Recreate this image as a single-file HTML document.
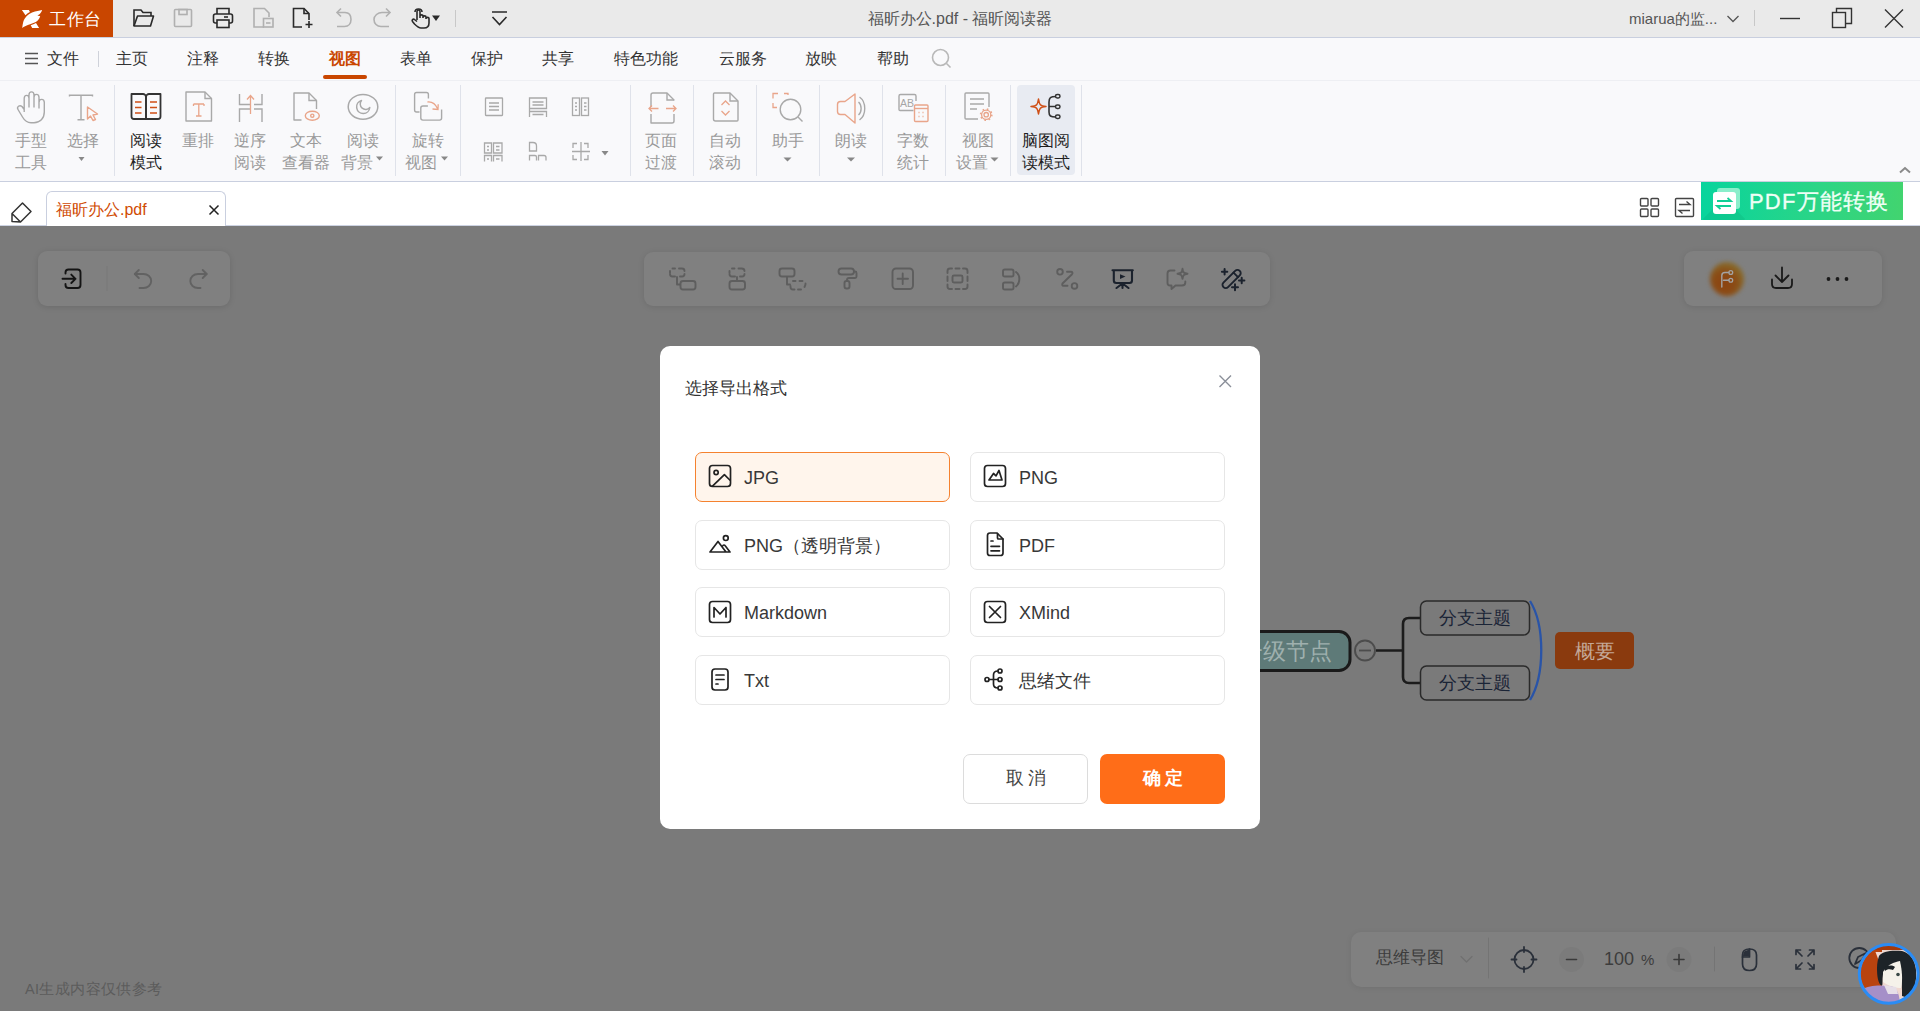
<!DOCTYPE html>
<html><head><meta charset="utf-8">
<style>
*{margin:0;padding:0;box-sizing:border-box}
html,body{width:1920px;height:1011px;overflow:hidden;background:#7a7a7a;font-family:"Liberation Sans",sans-serif;position:relative}
.a{position:absolute}
svg{position:absolute;overflow:visible}
#title{left:0;top:0;width:1920px;height:38px;background:#eaeaea;border-bottom:1px solid #c9cfdf}
#logo{left:0;top:0;width:113px;height:37px;background:#c94600;color:#fff;font-size:17px}
#menu{left:0;top:38px;width:1920px;height:42px;background:#f9f9fb}
#ribbon{left:0;top:80px;width:1920px;height:102px;background:#f9f9fb;border-top:1px solid #eeeff3;border-bottom:1px solid #c9cfdf}
#tabbar{left:0;top:182px;width:1920px;height:44px;background:#fff}
.mt{font-size:16px;color:#333;top:49px;line-height:20px;white-space:nowrap}
.rl{font-size:16px;color:#9a9a9a;line-height:22px;text-align:center;white-space:nowrap}
.rl.dk{color:#1e1e1e}
.sep{width:1px;background:#dfe2ea}
.tbsep{width:1px;background:#c8c8c8}
</style></head><body>
<!-- TITLE BAR -->
<div id="title" class="a"></div>

<div id="logo" class="a">
 <svg width="32" height="26" style="left:16px;top:6px" viewBox="0 0 32 26"><path d="M5.9 3.9 L12.9 3.9 L13.9 5.9 C12 6.8 10.5 7.9 9.5 9.3 Z" fill="#fff"/><path d="M6.2 21.9 C6.8 17 7.5 14.5 8.8 12.5 C11 8.5 15 6.3 19 5.4 C21.5 4.8 24 4.2 26.1 3.9 C25.6 5.6 24.8 7 23.5 8.2 L21.4 9.5 L24.2 10.3 C23.2 13 21.8 15 19.8 16 C17.5 17.3 14.5 18 12.5 18.7 C10 19.6 8 20.5 6.2 21.9 Z" fill="#fff"/><path d="M14.7 19.2 C16.5 18.6 18.4 17.8 20 17 L23.1 21.9 L16.2 21.9 Z" fill="#fff"/></svg>
 <div class="a" style="left:49px;top:9px;font-size:17px;line-height:21px;color:#fff;letter-spacing:0.5px">工作台</div>
</div>
<svg width="400" height="37" style="left:0;top:0" fill="none" stroke-width="1.6">
 <!-- open folder -->
 <path d="M134 26 L134 10 L141 10 L143 12.5 L151 12.5 L151 16" stroke="#2a2a2a"/>
 <path d="M134 26 L137.5 16 L153.5 16 L150.5 26 Z" stroke="#2a2a2a" stroke-linejoin="round"/>
 <!-- save -->
 <rect x="174.5" y="9.5" width="17" height="17" rx="1" stroke="#b0b0b0"/>
 <rect x="179" y="9.5" width="8" height="5" stroke="#b0b0b0"/>
 <!-- print -->
 <path d="M217 14 L217 8.5 L229 8.5 L229 14" stroke="#2a2a2a"/>
 <rect x="213.5" y="14" width="19" height="9" rx="2" stroke="#2a2a2a"/>
 <rect x="217" y="20" width="12" height="7.5" fill="#ebebeb" stroke="#2a2a2a"/>
 <line x1="224" y1="17" x2="228" y2="17" stroke="#2a2a2a"/>
 <!-- doc disabled -->
 <path d="M264 27 L254 27 L254 8.5 L264.5 8.5 L269 13 L269 17" stroke="#b0b0b0"/>
 <rect x="263.5" y="18.5" width="9.5" height="8.5" stroke="#b0b0b0"/>
 <line x1="266" y1="23" x2="270.5" y2="23" stroke="#b0b0b0"/>
 <!-- new doc -->
 <path d="M302 27 L293.5 27 L293.5 8.5 L304 8.5 L309 13.5 L309 20" stroke="#2a2a2a"/>
 <path d="M304 8.5 L304 13.5 L309 13.5" stroke="#2a2a2a"/>
 <path d="M309 21 L309 28 M305.5 24.5 L312.5 24.5" stroke="#2a2a2a"/>
 <!-- undo -->
 <path d="M338 12.5 L345 12.5 C349 12.5 351 15.5 351 19.5 C351 23.5 348.5 26.5 344.5 26.5 L337 26.5" stroke="#b0b0b0"/>
 <path d="M341 8.5 L337 12.5 L341 16.5" stroke="#b0b0b0"/>
 <!-- redo -->
 <path d="M389 12.5 L382 12.5 C378 12.5 374 15.5 374 19.5 C374 23.5 377 26.5 381 26.5 L389 26.5" stroke="#b0b0b0"/>
 <path d="M386 8.5 L390 12.5 L386 16.5" stroke="#b0b0b0"/>
 <!-- hand -->
 <path d="M417 20 L417 11.5 C417 9.5 420 9.5 420 11.5 L420 18 M420 16 C420 14.5 423 14.5 423 16 L423 18 M423 17 C423 15.5 426 15.5 426 17 L426 19 M426 18.5 C426 17 429 17 429 18.5 L429 23 C429 26 427 28 424 28 L421 28 C418.5 28 416.5 26 414.5 24 L412.5 21.5 C411.5 20 413 18.5 414.5 19.5 L417 21.5" stroke="#2a2a2a" stroke-linejoin="round"/>
 <path d="M415 12 C415 8 422 8 422 12" stroke="#2a2a2a"/>
 <path d="M432 15.5 L440 15.5 L436 21 Z" fill="#2a2a2a" stroke="none"/>
 <line x1="455.5" y1="10" x2="455.5" y2="27" stroke="#c8c8c8" stroke-width="1"/>
 <!-- dropdown -->
 <path d="M492 12 L507 12 M492.5 17 L499.5 24.5 L506.5 17" stroke="#2a2a2a"/>
</svg>
<div class="a" style="left:0;top:9px;width:1920px;text-align:center;font-size:16px;line-height:20px;color:#555">福昕办公.pdf - 福昕阅读器</div>
<div class="a" style="left:1629px;top:9px;font-size:15px;line-height:20px;color:#555;white-space:nowrap">miarua的监...</div>
<svg width="1920" height="37" style="left:0;top:0" fill="none" stroke-width="1.3">
 <path d="M1727.5 16 L1733 21.5 L1738.5 16" stroke="#555"/>
 <line x1="1754.5" y1="10" x2="1754.5" y2="26" stroke="#c8c8c8" stroke-width="1"/>
 <line x1="1780" y1="18.5" x2="1800" y2="18.5" stroke="#333" stroke-width="1.4"/>
 <rect x="1832.5" y="12.5" width="13" height="15" stroke="#333" stroke-width="1.4"/>
 <path d="M1836.5 12.5 L1836.5 8.5 L1851.5 8.5 L1851.5 23.5 L1845.5 23.5" stroke="#333" stroke-width="1.4"/>
 <path d="M1885 9.5 L1903 27.5 M1903 9.5 L1885 27.5" stroke="#333" stroke-width="1.4"/>
</svg>

<div id="menu" class="a"></div>
<svg width="20" height="20" style="left:24px;top:52px"><path d="M1 1.5 H14 M1 6.5 H14 M1 11.5 H14" stroke="#555" stroke-width="1.5"/></svg>
<div class="a mt" style="left:47px">文件</div>
<div class="a" style="left:98px;top:51px;width:1px;height:16px;background:#cfd2da"></div>
<div class="a mt" style="left:116px">主页</div>
<div class="a mt" style="left:187px">注释</div>
<div class="a mt" style="left:258px">转换</div>
<div class="a mt" style="left:329px;color:#c94600;font-weight:bold">视图</div>
<div class="a" style="left:323px;top:75px;width:44px;height:4px;border-radius:2px;background:#c94600"></div>
<div class="a mt" style="left:400px">表单</div>
<div class="a mt" style="left:471px">保护</div>
<div class="a mt" style="left:542px">共享</div>
<div class="a mt" style="left:614px">特色功能</div>
<div class="a mt" style="left:719px">云服务</div>
<div class="a mt" style="left:805px">放映</div>
<div class="a mt" style="left:877px">帮助</div>
<svg width="24" height="24" style="left:931px;top:48px" fill="none"><circle cx="9.5" cy="9.5" r="8" stroke="#b8b8b8" stroke-width="1.6"/><path d="M15.5 15.5 L19.5 19.5" stroke="#b8b8b8" stroke-width="1.6"/></svg>

<div id="ribbon" class="a"></div>
<div class="a" style="left:1017px;top:85px;width:58px;height:90px;border-radius:4px;background:#e8ebf2"></div>
<svg width="1920" height="100" style="left:0;top:81px" fill="none" stroke-width="1.4">
 <g stroke="#dfe2ea" stroke-width="1">
  <line x1="114.5" y1="4" x2="114.5" y2="95"/><line x1="395.5" y1="4" x2="395.5" y2="95"/><line x1="460.5" y1="4" x2="460.5" y2="95"/>
  <line x1="630.5" y1="4" x2="630.5" y2="95"/><line x1="693.5" y1="4" x2="693.5" y2="95"/><line x1="756.5" y1="4" x2="756.5" y2="95"/>
  <line x1="819.5" y1="4" x2="819.5" y2="95"/><line x1="882.5" y1="4" x2="882.5" y2="95"/><line x1="945.5" y1="4" x2="945.5" y2="95"/>
  <line x1="1010.5" y1="4" x2="1010.5" y2="95"/><line x1="1081.5" y1="4" x2="1081.5" y2="95"/>
 </g>
 <!-- hand -->
 <path d="M24.2 31 L24.2 17.5 C24.2 13.3 29 13.3 29 17.5 L29 14 C29 9.8 34 9.8 34 14 L34 16.5 C34 12.3 39 12.3 39 16.5 L39 21.5 C39 17.3 44.3 17.3 44.3 21.5 L44.3 31 C44.3 37.5 40 41.7 34 41.7 L31 41.7 C27 41.7 24.5 39.5 22.5 36 L18 28.5 C16.5 26 19.5 23.5 22 25.5 L24.2 28.5 M29 17.5 L29 26.6 M34 14 L34 26.6 M39 19 L39 27.5" stroke="#a9a9a9" stroke-linejoin="round"/>
 <!-- select T + cursor -->
 <path d="M69.5 15.5 L69.5 14.2 L92.5 14.2 L92.5 15.5 M81 14.2 L81 38.8 M77.5 38.8 L84.5 38.8" stroke="#a9a9a9"/>
 <path d="M87.5 26 L97.5 33 L93 34 L95.5 38.5 L93 39.5 L90.5 35 L87.5 38 Z" stroke="#e9a58a" stroke-linejoin="round"/>
 <path d="M78.5 76 L84.5 76 L81.5 80 Z" fill="#888" stroke="none"/>
 <!-- reading mode -->
 <path d="M131.5 13 L143 13 C144.5 13 146 14.5 146 16 L146 38 L134 38 C132.5 38 131.5 37 131.5 35.5 Z" stroke="#333" stroke-width="1.8" stroke-linejoin="round"/>
 <path d="M160.5 13 L149 13 C147.5 13 146 14.5 146 16 L146 38 L158 38 C159.5 38 160.5 37 160.5 35.5 Z" stroke="#333" stroke-width="1.8" stroke-linejoin="round"/>
 <path d="M135 21 L141.5 21 M135 26.5 L141.5 26.5 M135 32 L141.5 32 M150 21 L157 21 M150 26.5 L157 26.5 M150 32 L157 32" stroke="#cf4f17" stroke-width="1.4"/>
 <!-- reflow -->
 <path d="M186 40 L186 11 L205 11 L211.5 17.5 L211.5 40 Z" stroke="#a9a9a9" stroke-linejoin="round"/>
 <path d="M205 11 L205 17.5 L211.5 17.5" stroke="#a9a9a9"/>
 <path d="M193.5 23 L204 23 M193.5 23 L193.5 25 M204 23 L204 25 M198.8 23 L198.8 35 M196 35 L201.5 35" stroke="#e9a58a" stroke-width="1.3"/>
 <!-- reverse reading -->
 <path d="M239.5 13 L239.5 23.5 L250 23.5 M239.5 41 L239.5 28 L250 28 M262 13 L262 23.5 L254 23.5 M262 41 L262 28 L254 28" stroke="#a9a9a9"/>
 <path d="M250.5 33 L250.5 15 M247 18.5 L250.5 14.5 L254 18.5" stroke="#e9a58a" stroke-width="1.3"/>
 <!-- text viewer -->
 <path d="M301.5 39 L294 39 L294 12 L309 12 L316.5 19.5 L316.5 28" stroke="#a9a9a9" stroke-linejoin="round"/>
 <path d="M309 12 L309 19.5 L316.5 19.5" stroke="#a9a9a9"/>
 <ellipse cx="312.3" cy="34.7" rx="7" ry="4.5" stroke="#e9a58a"/>
 <circle cx="312.3" cy="34.7" r="1.6" stroke="#e9a58a"/>
 <!-- reading background -->
 <ellipse cx="363" cy="25.8" rx="14.8" ry="12.4" stroke="#a9a9a9" stroke-width="1.5"/>
 <path d="M361.5 19.5 A6.6 6.6 0 1 0 369.8 26.5 A5.3 5.3 0 0 1 361.5 19.5 Z" stroke="#a9a9a9" stroke-width="1.5" stroke-linejoin="round"/>
 <path d="M376 75.5 L383 75.5 L379.5 79.5 Z" fill="#888" stroke="none"/>
 <!-- rotate -->
 <path d="M419.5 31 L416.5 31 C415.3 31 414.6 30.3 414.6 29 L414.6 13.5 C414.6 12.2 415.3 11.5 416.5 11.5 L426.5 11.5 C427.8 11.5 428.4 12.2 428.4 13.5 L428.4 17.4" stroke="#a9a9a9"/>
 <path d="M427.9 25 L423 25 C421.7 25 420.8 25.7 420.8 27 L420.8 37 C420.8 38.3 421.7 39.1 423 39.1 L439.6 39.1 C440.9 39.1 441.6 38.3 441.6 37 L441.6 28.5" stroke="#a9a9a9"/>
 <path d="M427.5 21 C431.5 20.5 435.5 23 437.8 28 M432.5 28 L438 28.5 L438.2 23.2" stroke="#e9a58a" stroke-width="1.3"/>
 <path d="M441 75.5 L448 75.5 L444.5 79.5 Z" fill="#888" stroke="none"/>
 <!-- small grid icons -->
 <g stroke="#a9a9a9" stroke-width="1.3">
  <rect x="485.5" y="17" width="17" height="17.5" rx="0.5"/>
  <path d="M489 22 L499 22 M489 25.5 L499 25.5 M489 29 L499 29"/>
  <path d="M529.5 34.5 L529.5 17 L546.5 17 L546.5 27.5 L529.5 27.5 M532.5 21 L543.5 21 M532.5 24 L543.5 24 M529.5 36 L529.5 30.5 L546.5 30.5 L546.5 36 M532.5 33.5 L543.5 33.5"/>
  <rect x="572.5" y="17" width="7" height="17.5"/><rect x="581.5" y="17" width="7" height="17.5"/>
  <path d="M575 22 L577 22 M575 25.5 L577 25.5 M575 29 L577 29 M584 22 L586.5 22 M584 25.5 L586.5 25.5 M584 29 L586.5 29"/>
  <path d="M484.5 68.5 L484.5 62 L491.5 62 L491.5 72 L484.5 72 L484.5 68 M493.5 62 L502 62 L502 72 L493.5 72 Z M487 65.5 L489 65.5 M487 69 L489 69 M496 65.5 L499.5 65.5 M496 69 L499.5 69 M484.5 80.5 L484.5 74.5 L491.5 74.5 L491.5 80.5 M493.5 80.5 L493.5 74.5 L502 74.5 L502 80.5 M487 78 L489 78 M496 78 L499.5 78"/>
  <path d="M529.5 70 L529.5 61.5 L533 61.5 C535 61.5 536.5 63 536.5 65 L536.5 70 Z M529.5 79.5 L529.5 74.5 L535 74.5 C536 74.5 536.5 75 536.5 76 L536.5 79.5 M538.5 79.5 L538.5 74.5 L544 74.5 C545 74.5 546 75.5 546 76.5 L546 79.5"/>
  <path d="M573 67 L573 62.5 L577 62.5 M584 62.5 L588 62.5 L588 67 M573 74 L573 78.5 L577 78.5 M584 78.5 L588 78.5 L588 74 M581 61 L581 80 M572 70.5 L590 70.5"/>
 </g>
 <path d="M601.5 70 L608.5 70 L605 74.5 Z" fill="#888" stroke="none"/>
 <!-- page transition -->
 <path d="M651 26 L651 14 C651 12.5 651.5 12 653 12 L667 12 L674 19 L674 19.5 M651 33 L651 42 L672 42 C673 42 674 41 674 40 L674 33" stroke="#a9a9a9" stroke-linejoin="round"/>
 <path d="M667 12 L667 19 L674 19" stroke="#a9a9a9"/>
 <path d="M649 27.5 L658.5 27.5 M652 24.5 L649 27.5 L652 30.5 M666 27.5 L676 27.5 M673 24.5 L676 27.5 L673 30.5" stroke="#e9a58a" stroke-width="1.3"/>
 <!-- auto scroll -->
 <path d="M713.5 38 L713.5 13 C713.5 12.5 714 12 714.5 12 L730 12 L738 20 L738 39 C738 39.5 737.5 40 737 40 L715.5 40 C714 40 713.5 39.5 713.5 38 Z" stroke="#a9a9a9" stroke-linejoin="round"/>
 <path d="M730 12 L730 20 L738 20" stroke="#a9a9a9"/>
 <path d="M721.5 24 L725.5 20 L729.5 24 M721.5 30 L725.5 34 L729.5 30" stroke="#e9a58a" stroke-width="1.3"/>
 <g transform="translate(0,1)"><!-- assistant -->
 <path d="M773 16.5 L773 11.5 L778 11.5 M784 11.5 L788 11.5 L788 13 M773 21 L773 25.5 L777 25.5" stroke="#e9a58a" stroke-width="1.3"/>
 <circle cx="790.5" cy="27.5" r="10.3" stroke="#a9a9a9"/>
 <path d="M798 35 L802.5 39.5" stroke="#a9a9a9"/>
 <path d="M860 67 L864 71 L868 67" fill="none" stroke="none"/>
 <path d="M783.5 75.5 L791.5 75.5 L787.5 79.5 Z" fill="#888" stroke="none"/>
 <!-- read aloud -->
 <path d="M855 12 L845 19.5 L840.5 19.5 C838.5 19.5 837.5 20.5 837.5 22.5 L837.5 29.5 C837.5 31.5 838.5 32.5 840.5 32.5 L845 32.5 L855 41 Z" stroke="#e9a58a" stroke-linejoin="round"/>
 <path d="M858.5 20 C862 23 862 30 858.5 33 M859.5 15 C866.5 20 866.5 33 859.5 38" stroke="#a9a9a9"/>
 <path d="M847 75.5 L855 75.5 L851 79.5 Z" fill="#888" stroke="none"/>
 <!-- word count -->
 <path d="M913.5 28.5 L900 28.5 C899.5 28.5 899 28 899 27.5 L899 14 C899 13 899.5 12.5 900.5 12.5 L914.5 12.5 C915.5 12.5 916 13 916 14 L916 19" stroke="#a9a9a9"/>
 <text x="900" y="25" font-family="Liberation Sans" font-size="10.5" fill="#a6a6a6" stroke="none">AB</text>
 <rect x="914.5" y="23" width="13.5" height="16.5" rx="1" stroke="#e9a58a"/>
 <path d="M914.5 26.5 L928 26.5" stroke="#e9a58a"/>
 <path d="M918.5 30.5 L919.5 30.5 M922.5 30.5 L923.5 30.5 M918.5 34.5 L919.5 34.5 M922.5 34.5 L923.5 34.5" stroke="#e9a58a" stroke-width="1.6"/>
 <!-- view settings -->
 <path d="M978 37 L966 37 C965.5 37 965 36.5 965 36 L965 12 C965 11.5 965.5 11 966 11 L988 11 C988.5 11 989 11.5 989 12 L989 25" stroke="#a9a9a9"/>
 <path d="M970 17 L984 17 M970 22 L984 22 M970 27 L977 27" stroke="#a9a9a9"/>
 <circle cx="986.2" cy="32.7" r="4.6" stroke="#e9a58a" stroke-width="1.3"/><circle cx="986.2" cy="32.7" r="5.6" stroke="#e9a58a" stroke-width="1.6" stroke-dasharray="1.6 2.8"/>
 <circle cx="986.2" cy="32.7" r="2.2" stroke="#e9a58a" stroke-width="1.3"/>
 <path d="M990.5 75.5 L998.5 75.5 L994.5 79.5 Z" fill="#888" stroke="none"/>
 </g>
 <!-- mindmap reading -->
 <path d="M1038.5 18 C1039.5 24 1040 25 1046 25.5 C1040 26 1039.5 27 1038.5 33 C1037.5 27 1037 26 1031 25.5 C1037 25 1037.5 24 1038.5 18 Z" stroke="#cf4f17" stroke-width="1.5" stroke-linejoin="round"/>
 <path d="M1056 15.5 C1050.5 15.5 1049 16.5 1049 21 L1049 31 C1049 35 1050.5 36 1056 36 M1049 25.5 L1056 25.5" stroke="#333" stroke-width="1.6"/>
 <rect x="1055.5" y="13.5" width="4.5" height="3.5" rx="1.7" stroke="#333" stroke-width="1.5"/>
 <rect x="1055.5" y="24" width="4.5" height="3.5" rx="1.7" stroke="#333" stroke-width="1.5"/>
 <rect x="1055.5" y="34" width="4.5" height="3.5" rx="1.7" stroke="#333" stroke-width="1.5"/>
 <!-- collapse caret -->
 <path d="M1900 91.5 L1905 87 L1910 91.5" stroke="#8a8a8a" stroke-width="2"/>
</svg>
<div class="a rl" style="left:15px;top:130px;width:32px">手型<br>工具</div>
<div class="a rl" style="left:67px;top:130px;width:32px">选择</div>
<div class="a rl dk" style="left:130px;top:130px;width:32px">阅读<br>模式</div>
<div class="a rl" style="left:182px;top:130px;width:32px">重排</div>
<div class="a rl" style="left:234px;top:130px;width:32px">逆序<br>阅读</div>
<div class="a rl" style="left:282px;top:130px;width:48px">文本<br>查看器</div>
<div class="a rl" style="left:347px;top:130px;width:32px">阅读</div><div class="a rl" style="left:341px;top:152px;width:32px">背景</div>
<div class="a rl" style="left:412px;top:130px;width:32px">旋转</div><div class="a rl" style="left:405px;top:152px;width:32px">视图</div>
<div class="a rl" style="left:645px;top:130px;width:32px">页面<br>过渡</div>
<div class="a rl" style="left:709px;top:130px;width:32px">自动<br>滚动</div>
<div class="a rl" style="left:772px;top:130px;width:32px">助手</div>
<div class="a rl" style="left:835px;top:130px;width:32px">朗读</div>
<div class="a rl" style="left:897px;top:130px;width:32px">字数<br>统计</div>
<div class="a rl" style="left:962px;top:130px;width:32px">视图</div><div class="a rl" style="left:956px;top:152px;width:32px">设置</div>
<div class="a rl dk" style="left:1021px;top:130px;width:50px">脑图阅<br>读模式</div>

<div id="tabbar" class="a"></div>
<svg width="30" height="30" style="left:8px;top:198px" fill="none"><path d="M4 23.5 L4 15.5 L14.5 5 L23 13.5 L12.5 24 Z M4 15.5 L12 23.5" stroke="#333" stroke-width="1.5" stroke-linejoin="round"/></svg>
<div class="a" style="left:0;top:225px;width:47px;height:1px;background:#cdd3e2"></div><div class="a" style="left:225px;top:225px;width:1695px;height:1px;background:#cdd3e2"></div>
<div class="a" style="left:46px;top:191px;width:180px;height:36px;border:1px solid #c9cfdf;border-bottom:none;border-radius:6px 6px 0 0;background:#fff"></div>
<div class="a" style="left:56px;top:200px;font-size:16px;line-height:20px;color:#d04a02;white-space:nowrap">福昕办公.pdf</div>
<svg width="14" height="14" style="left:207px;top:203px"><path d="M2.5 2.5 L11.5 11.5 M11.5 2.5 L2.5 11.5" stroke="#222" stroke-width="1.5"/></svg>
<svg width="60" height="30" style="left:1636px;top:194px" fill="none" stroke="#444" stroke-width="1.4">
 <rect x="4.5" y="4.5" width="7.5" height="7.5" rx="1"/><rect x="15" y="4.5" width="7.5" height="7.5" rx="1"/>
 <rect x="4.5" y="15" width="7.5" height="7.5" rx="1"/><rect x="15" y="15" width="7.5" height="7.5" rx="1"/>
 <rect x="39.5" y="4.5" width="18" height="18" rx="1"/>
 <path d="M43 10.5 L54 10.5 L50.5 7.5 M54 16.5 L43 16.5 L46.5 19.5"/>
</svg>
<div class="a" style="left:1701px;top:182px;width:202px;height:38px;background:linear-gradient(90deg,#08d49d 0%,#2dd585 60%,#42d46f 100%);overflow:hidden">
 <div class="a" style="left:8px;top:22px;width:30px;height:30px;background:rgba(0,110,70,0.10);transform:rotate(45deg)"></div>
 <div class="a" style="left:16px;top:6px;width:23px;height:21px;border-radius:3px;background:#8aeecb"></div>
 <div class="a" style="left:12px;top:10px;width:23px;height:22px;border-radius:3px;background:#fff"></div>
 <svg width="23" height="23" style="left:12px;top:10px" fill="none" stroke="#10cf95" stroke-width="1.8"><path d="M4 9 L18 9 L14.5 6 M18 14 L4 14 L7.5 17"/></svg>
 <div class="a" style="left:48px;top:7px;font-size:22px;line-height:26px;color:#effff6;letter-spacing:1.2px;white-space:nowrap;-webkit-text-stroke:0.3px #effff6">PDF万能转换</div>
</div>

<!-- CANVAS -->
<div class="a" style="left:0;top:226px;width:1920px;height:785px;background:#7a7a7a"></div>
<!-- left toolbar -->
<div class="a" style="left:38px;top:251px;width:192px;height:55px;border-radius:9px;background:#808080;box-shadow:0 1px 6px rgba(0,0,0,0.12)"></div>
<svg width="300" height="400" style="left:0;top:0" fill="none" stroke-width="1.9" stroke-linecap="round" stroke-linejoin="round">
 <path d="M65.5 273.5 L65.5 272.5 C65.5 270.8 66.8 269.5 68.5 269.5 L77.5 269.5 C79.2 269.5 80.5 270.8 80.5 272.5 L80.5 285 C80.5 286.7 79.2 288 77.5 288 L68.5 288 C66.8 288 65.5 286.7 65.5 285 L65.5 284" stroke="#141414"/>
 <path d="M62.5 278.8 L75.5 278.8 M71.3 274.6 L75.5 278.8 L71.3 283" stroke="#141414"/>
 <line x1="107" y1="266.5" x2="107" y2="290.5" stroke="#787878" stroke-width="1"/>
 <path d="M135 274 L143.5 274 C147.8 274 151.2 277 151.2 281 C151.2 285 147.8 288 143.5 288 L139.5 288" stroke="#626262"/>
 <path d="M138.8 270 L134.8 274 L138.8 278" stroke="#626262"/>
 <path d="M206.5 274 L198 274 C193.7 274 190.3 277 190.3 281 C190.3 285 193.7 288 198 288 L200.5 288" stroke="#626262"/>
 <path d="M202.7 270 L206.7 274 L202.7 278" stroke="#626262"/>
</svg>
<!-- middle toolbar -->
<div class="a" style="left:644px;top:252px;width:626px;height:54px;border-radius:9px;background:#808080;box-shadow:0 1px 6px rgba(0,0,0,0.10)"></div>
<svg width="1920" height="400" style="left:0;top:0" fill="none" stroke-width="1.9" stroke-linecap="round" stroke-linejoin="round">
 <g stroke="#5e5e5e">
  <!-- 1 add child -->
  <path d="M670 271 L670 273 M672.5 268.5 L675 268.5 M679 268.5 L682 268.5 C683.5 268.5 684.5 269.5 684.5 271 M684.5 274 C684.5 275.5 683.5 276.5 682 276.5 L680 276.5 M675 276.5 L672.5 276.5 C671 276.5 670 275.5 670 274"/>
  <path d="M677 277 L677 284.5 L680 284.5"/>
  <rect x="680.5" y="281" width="15" height="8.5" rx="2.5"/>
  <!-- 2 add sibling -->
  <path d="M729.5 271 L729.5 273 M732 268.5 L734.5 268.5 M738.5 268.5 L741.5 268.5 C743 268.5 744.5 269.5 744.5 271 M744.5 274 C744.5 275.5 743.5 276.5 742 276.5 L740 276.5 M735 276.5 L732 276.5 C730.5 276.5 729.5 275.5 729.5 274"/>
  <path d="M737 277 L737 281"/>
  <rect x="729.5" y="281" width="15.5" height="8.5" rx="2.5"/>
  <!-- 3 add parent -->
  <rect x="779.5" y="268.5" width="15" height="8" rx="2.5"/>
  <path d="M787 277 L787 284.5 L790 284.5"/>
  <path d="M790.5 286 L790.5 287 C790.5 288.5 791.5 289.5 793 289.5 L794.5 289.5 M798 289.5 L801 289.5 M804.5 287 C805 286 805.5 285 805.5 284 L805.5 283.5 M802.5 281 L799.5 281 M795.5 281 L793 281"/>
  <!-- 4 roller -->
  <rect x="838.5" y="268.5" width="15.5" height="6" rx="3"/>
  <path d="M854 271.5 L855 271.5 C856 271.5 856.5 272 856.5 273 L856.5 276.5 C856.5 277.5 856 278 855 278 L849 278 C848 278 847 279 847 280 L847 281"/>
  <rect x="844.5" y="281" width="5" height="7.5" rx="2"/>
  <!-- 5 plus -->
  <rect x="892.5" y="268.5" width="20.5" height="20.5" rx="3.5"/>
  <path d="M902.7 273.5 L902.7 284 M897.5 278.8 L908 278.8"/>
  <!-- 6 dashed box -->
  <path d="M947.5 273 L947.5 271 C947.5 269.5 948.5 268.5 950 268.5 L952 268.5 M955.5 268.5 L959.5 268.5 M963 268.5 L965 268.5 C966.5 268.5 967.5 269.5 967.5 271 L967.5 273 M967.5 276.5 L967.5 281 M967.5 284.5 L967.5 286.5 C967.5 288 966.5 289 965 289 L963 289 M959.5 289 L955.5 289 M952 289 L950 289 C948.5 289 947.5 288 947.5 286.5 L947.5 284.5 M947.5 281 L947.5 276.5"/>
  <rect x="952.5" y="275.5" width="10" height="7" rx="1.5"/>
  <!-- 7 summary -->
  <rect x="1003" y="269.5" width="10.5" height="7" rx="1.8"/>
  <rect x="1003" y="282.5" width="10.5" height="7" rx="1.8"/>
  <path d="M1016 272 C1020.5 275 1020.5 283 1016 286.5"/>
  <!-- 8 relation -->
  <circle cx="1060" cy="271.8" r="2.8"/><circle cx="1074.5" cy="285.9" r="2.8"/>
  <path d="M1067 271.8 L1071 271.8 C1072.5 271.8 1073 273 1072 274.2 L1062.5 283.5 C1062 284.2 1062 285.8 1063.5 285.8 L1067.5 285.8"/>
 </g>
 <g stroke="#1b222d" stroke-width="2.1">
  <!-- 9 presentation -->
  <path d="M1112.5 270.2 L1132.8 270.2 M1113.8 270.5 L1113.8 280.5 C1113.8 282 1114.8 283 1116.3 283 L1129.5 283 C1131 283 1132 282 1132 280.5 L1132 270.5 M1122.5 283.5 L1116.5 288 M1122.5 283.5 L1122.5 288 M1122.5 283.5 L1128.5 288"/>
 </g>
 <path d="M1120 274.3 L1125.5 276.6 L1120 278.9 Z" fill="#1b222d"/>
 <g stroke="#5e5e5e" stroke-width="1.9">
  <!-- 10 chat sparkle -->
  <path d="M1174.5 270.5 L1170.5 270.5 C1168.5 270.5 1167.5 271.5 1167.5 273.5 L1167.5 283 C1167.5 284.5 1168.5 285.5 1170 285.5 L1171.5 285.5 L1171.5 289 L1175.5 285.5 L1182 285.5 C1184 285.5 1185.3 284.5 1185.3 282.5 L1185.3 281.5"/>
  <path d="M1182.5 268.8 C1183 272.5 1183.8 273.3 1187.5 273.8 C1183.8 274.3 1183 275.1 1182.5 278.8 C1182 275.1 1181.2 274.3 1177.5 273.8 C1181.2 273.3 1182 272.5 1182.5 268.8 Z"/>
 </g>
 <g stroke="#1b222d" stroke-width="1.9">
  <!-- 11 wand -->
  <rect x="1220.1" y="275.75" width="23" height="6.5" rx="3.2" transform="rotate(-45 1231.6 279)"/>
  <path d="M1233.5 272.6 L1238 277.1"/>
  <path d="M1224.6 269 L1224.6 274.5 M1221.9 271.75 L1227.3 271.75 M1241.7 277.8 L1241.7 283.2 M1239 280.5 L1244.4 280.5 M1235 284.2 L1235 290.2 M1232 287.2 L1238 287.2" stroke-width="2"/>
 </g>
</svg>
<!-- right toolbar -->
<div class="a" style="left:1684px;top:251px;width:198px;height:55px;border-radius:9px;background:#808080;box-shadow:0 1px 6px rgba(0,0,0,0.10)"></div>
<div class="a" style="left:1710px;top:262px;width:34px;height:34px;border-radius:50%;background:radial-gradient(circle at 42% 62%,#8c4210 0%,#8a4c16 40%,#876a2a 70%,rgba(128,128,128,0) 100%);filter:blur(2px)"></div>
<svg width="200" height="60" style="left:1684px;top:251px" fill="none" stroke-linecap="round" stroke-linejoin="round">
 <path d="M37.8 36 L37.8 24.5 C37.8 22.5 39 21.5 41 21.5 L44.8 21.5 M39.5 29.2 L44.8 29.2" stroke="#a3a3a3" stroke-width="1.4"/>
 <circle cx="46.8" cy="21.5" r="1.9" stroke="#a3a3a3" stroke-width="1.3"/><circle cx="46.8" cy="29.2" r="1.9" stroke="#a3a3a3" stroke-width="1.3"/>
 <path d="M98 16.5 L98 31 M91.5 24.5 L98 31 L104.5 24.5 M88 28.5 L88 33 C88 35.5 89.5 37 92 37 L104 37 C106.5 37 108 35.5 108 33 L108 28.5" stroke="#1a1a1a" stroke-width="1.8"/>
 <circle cx="144.5" cy="28" r="1.9" fill="#1a1a1a"/><circle cx="153.5" cy="28" r="1.9" fill="#1a1a1a"/><circle cx="162.5" cy="28" r="1.9" fill="#1a1a1a"/>
</svg>
<!-- mindmap -->
<svg width="420" height="140" style="left:1220px;top:580px" fill="none">
 <rect x="-40" y="51.5" width="170" height="39" rx="11" fill="#5e7a78" stroke="#1a1a1a" stroke-width="3"/>
 <circle cx="145" cy="70.5" r="10" stroke="#4c4c4c" stroke-width="1.9"/>
 <path d="M139 70.5 L151 70.5" stroke="#4c4c4c" stroke-width="1.8"/>
 <path d="M156 70.5 L183 70.5 M201 38 L189 38 C185 38 183 40 183 44 L183 97 C183 101 185 103 189 103 L201 103" stroke="#1c1c1c" stroke-width="2.6"/>
 <rect x="200.5" y="21" width="109" height="34" rx="6" stroke="#2a2a2a" stroke-width="1.5"/>
 <rect x="200.5" y="86" width="109" height="34" rx="6" stroke="#2a2a2a" stroke-width="1.5"/>
 <path d="M310 21 C325 45 325 95 310 120" stroke="#2954a8" stroke-width="2.3"/>
 <rect x="335" y="52" width="79" height="37" rx="5" fill="#8a3a0e"/>
</svg>
<div class="a" style="left:1260px;top:636px;font-size:23px;line-height:30px;color:#9fb0ae;white-space:nowrap;overflow:hidden;width:92px"><span style="margin-left:-20px">一级节点</span></div>
<div class="a" style="left:1420px;top:607px;width:110px;text-align:center;font-size:18px;line-height:22px;color:#1a2436">分支主题</div>
<div class="a" style="left:1420px;top:672px;width:110px;text-align:center;font-size:18px;line-height:22px;color:#1a2436">分支主题</div>
<div class="a" style="left:1555px;top:639px;width:79px;text-align:center;font-size:20px;line-height:24px;color:#c4a898">概要</div>
<!-- bottom toolbar -->
<div class="a" style="left:1351px;top:932px;width:545px;height:55px;border-radius:10px;background:#808080;box-shadow:0 1px 6px rgba(0,0,0,0.08)"></div>
<div class="a" style="left:1376px;top:947px;font-size:17px;line-height:22px;color:#3c3c3c;white-space:nowrap">思维导图</div>
<div class="a" style="left:1604px;top:948px;font-size:18px;line-height:22px;color:#3c3c3c;white-space:nowrap">100 <span style="font-size:15px;margin-left:2px">%</span></div>
<svg width="560" height="60" style="left:1351px;top:933px" fill="none" stroke-linecap="round" stroke-linejoin="round">
 <path d="M110 23.5 L115.5 29 L121 23.5" stroke="#707070" stroke-width="1.3"/>
 <line x1="137.5" y1="5" x2="137.5" y2="45" stroke="#747474" stroke-width="1"/>
 <circle cx="173" cy="26.5" r="9.5" stroke="#2a303a" stroke-width="1.8"/>
 <path d="M173 14 L173 19 M173 34 L173 39 M160.5 26.5 L165.5 26.5 M180.5 26.5 L185.5 26.5" stroke="#2a303a" stroke-width="1.8"/>
 <circle cx="220.5" cy="26.5" r="12.5" fill="#7b7b7b"/>
 <path d="M215.5 26.5 L225.5 26.5" stroke="#3a3a3a" stroke-width="1.6"/>
 <circle cx="328" cy="26.5" r="12.5" fill="#7b7b7b"/>
 <path d="M323 26.5 L333 26.5 M328 21.5 L328 31.5" stroke="#3a3a3a" stroke-width="1.6"/>
 <line x1="363.5" y1="14" x2="363.5" y2="38" stroke="#747474" stroke-width="1"/>
 <path d="M391.5 22 C391.5 18 394 16 398.5 16 C403 16 405.5 18 405.5 22 L405.5 31 C405.5 35 403 37.5 398.5 37.5 C394 37.5 391.5 35 391.5 31 Z" stroke="#2a303a" stroke-width="1.7"/>
 <path d="M398.5 16 L398.5 24 M391.5 24 L398.5 24" stroke="#2a303a" stroke-width="1.7"/>
 <path d="M398.5 17 L398.5 23.5 L392 23.5 C392 19 394 17 398.5 17 Z" fill="#2a303a"/>
 <path d="M445 21.5 L445 17 L449.5 17 M445 17 L451 23 M463 21.5 L463 17 L458.5 17 M463 17 L457 23 M445 31.5 L445 36 L449.5 36 M445 36 L451 30 M463 31.5 L463 36 L458.5 36 M463 36 L457 30" stroke="#2a303a" stroke-width="1.7"/>
 
</svg>
<!-- avatar -->
<svg width="70" height="70" style="left:1850px;top:938px">
 <defs><clipPath id="av"><circle cx="38.7" cy="35.8" r="28.5"/></clipPath></defs>
 <circle cx="9.3" cy="20" r="10" fill="none" stroke="#2a303a" stroke-width="1.8"/>
 <path d="M5 26 L8 19 L16 15 L12 22 Z" fill="none" stroke="#2a303a" stroke-width="1.8" stroke-linejoin="round"/>
 <g clip-path="url(#av)">
  <rect x="0" y="0" width="70" height="70" fill="#efd8d0"/>
  <rect x="0" y="0" width="32" height="70" fill="#b9430f"/>
  <rect x="0" y="0" width="70" height="12" fill="#a63a0a"/>
  <path d="M25.5 14 L33 14 L30 26 Z" fill="#f0d9d2"/>
  <path d="M29 18 C32 13 42 12 52 13 C60 15 65 22 66 32 C67 44 64 54 58 60 L52 58 C52 50 52 40 50 30 C44 26 36 30 33 36 C32 42 33 46 32 48 C28 46 27 38 27 30 C27 25 28 21 29 18 Z" fill="#1d2328"/>
  <path d="M33 34 C37 27 44 24 50 23 C52 32 53 42 51 50 C46 50 39 48 33 44 Z" fill="#f5f2ea"/>
  <path d="M34 30 C38 27 42 27 45 29 L43 32 C40 31 37 31 35 33 Z" fill="#1d2328"/>
  <circle cx="48" cy="36.5" r="1.8" fill="#3b4a47"/>
  <path d="M12 52 C18 47 30 47 40 48 C46 49 50 54 50 70 L8 70 Z" fill="#a58fc8"/>
  <path d="M34 47 L46 49 L48 56 L38 56 Z" fill="#e6dfe8"/>
  <path d="M8 42 C12 44 15 50 17 58 L8 62 Z" fill="#e3d0c4"/>
 </g>
 <circle cx="38.7" cy="35.8" r="29.4" fill="none" stroke="#2a8cf5" stroke-width="3"/>
</svg>
<div class="a" style="left:25px;top:980px;font-size:14.5px;line-height:18px;color:#5c5c5c;white-space:nowrap;letter-spacing:0.4px">AI生成内容仅供参考</div>
<!-- DIALOG -->
<div class="a" style="left:660px;top:346px;width:600px;height:483px;border-radius:10px;background:#fff"></div>
<div class="a" style="left:685px;top:377px;font-size:17.3px;line-height:22px;color:#333;white-space:nowrap">选择导出格式</div>
<svg width="16" height="16" style="left:1217px;top:373px"><path d="M2.5 2.5 L14 14 M14 2.5 L2.5 14" stroke="#8a8f99" stroke-width="1.4"/></svg>
<div class="a" style="left:695px;top:452px;width:255px;height:50px;border-radius:7px;background:#fff5ec;border:1.3px solid #f5822f"></div>
<div class="a" style="left:744px;top:466px;font-size:18px;line-height:24px;color:#383838;white-space:nowrap">JPG</div>
<div class="a" style="left:970px;top:452px;width:255px;height:50px;border-radius:7px;background:#fff;border:1px solid #e6e6e6"></div>
<div class="a" style="left:1019px;top:466px;font-size:18px;line-height:24px;color:#383838;white-space:nowrap">PNG</div>
<div class="a" style="left:695px;top:520px;width:255px;height:50px;border-radius:7px;background:#fff;border:1px solid #e6e6e6"></div>
<div class="a" style="left:744px;top:534px;font-size:18px;line-height:24px;color:#383838;white-space:nowrap">PNG（透明背景）</div>
<div class="a" style="left:970px;top:520px;width:255px;height:50px;border-radius:7px;background:#fff;border:1px solid #e6e6e6"></div>
<div class="a" style="left:1019px;top:534px;font-size:18px;line-height:24px;color:#383838;white-space:nowrap">PDF</div>
<div class="a" style="left:695px;top:587px;width:255px;height:50px;border-radius:7px;background:#fff;border:1px solid #e6e6e6"></div>
<div class="a" style="left:744px;top:601px;font-size:18px;line-height:24px;color:#383838;white-space:nowrap">Markdown</div>
<div class="a" style="left:970px;top:587px;width:255px;height:50px;border-radius:7px;background:#fff;border:1px solid #e6e6e6"></div>
<div class="a" style="left:1019px;top:601px;font-size:18px;line-height:24px;color:#383838;white-space:nowrap">XMind</div>
<div class="a" style="left:695px;top:655px;width:255px;height:50px;border-radius:7px;background:#fff;border:1px solid #e6e6e6"></div>
<div class="a" style="left:744px;top:669px;font-size:18px;line-height:24px;color:#383838;white-space:nowrap">Txt</div>
<div class="a" style="left:970px;top:655px;width:255px;height:50px;border-radius:7px;background:#fff;border:1px solid #e6e6e6"></div>
<div class="a" style="left:1019px;top:669px;font-size:18px;line-height:24px;color:#383838;white-space:nowrap">思绪文件</div>
<svg width="600" height="300" style="left:660px;top:420px" fill="none" stroke="#222" stroke-width="1.7" stroke-linecap="round" stroke-linejoin="round">
 <!-- JPG icon (709,465) -->
 <rect x="49.5" y="45.5" width="21" height="21" rx="3"/>
 <circle cx="56.1" cy="52.5" r="2.1"/>
 <path d="M52.5 66.2 L64.4 54.7 L69.8 60"/>
 <!-- PNG icon -->
 <rect x="324.5" y="45.5" width="21" height="21" rx="3"/>
 <path d="M329 60 L333.5 53.5 L336 55.8 L339 50.5 L342 60 Z"/>
 <!-- PNG transparent -->
 <path d="M50 132 L58 121.5 L66 132 Z M63 125.5 C63.5 124.8 64.5 124.8 65 125.5 L70 132 L66 132"/>
 <circle cx="65.8" cy="118.1" r="2.4"/>
 <!-- PDF doc -->
 <path d="M327.5 115.5 C327.5 114 328.5 113 330 113 L337 113 L343 119 L343 133 C343 134.5 342 135.5 340.5 135.5 L330 135.5 C328.5 135.5 327.5 134.5 327.5 133 Z"/>
 <path d="M337.5 113.5 L337.5 118 C337.5 118.5 338 119 338.5 119 L343 119 M331 121 L333 121 M331 126.3 L339.5 126.3 M331 130.8 L339.5 130.8"/>
 <!-- Markdown -->
 <rect x="49.5" y="181.5" width="21" height="21" rx="3"/>
 <path d="M54 197 L54 187.5 L60 194 L66 187.5 L66 197"/>
 <!-- XMind -->
 <rect x="324.5" y="181.5" width="21" height="21" rx="3"/>
 <path d="M329.5 186.5 L340.5 197.5 M340.5 186.5 L329.5 197.5"/>
 <!-- Txt -->
 <rect x="52" y="249" width="16" height="21" rx="3"/>
 <path d="M56 255 L64 255 M56 259.5 L64 259.5 M56 264 L58 264"/>
 <!-- mind file -->
 <circle cx="327" cy="259.5" r="2"/>
 <path d="M329 259.5 L333.5 259.5 M338 251 C335 251 333.5 252.5 333.5 255 L333.5 264 C333.5 266.5 335 268 338 268 M333.5 259.5 L338 259.5"/>
 <circle cx="340" cy="251" r="2"/><circle cx="340" cy="259.5" r="2"/><circle cx="340" cy="268" r="2"/>
</svg>
<div class="a" style="left:963px;top:754px;width:125px;height:50px;border-radius:7px;border:1px solid #dcdcdc;background:#fff"></div>
<div class="a" style="left:963px;top:766px;width:125px;text-align:center;font-size:18px;line-height:24px;color:#444;letter-spacing:4px;text-indent:4px">取消</div>
<div class="a" style="left:1100px;top:754px;width:125px;height:50px;border-radius:7px;background:#ff6d18"></div>
<div class="a" style="left:1100px;top:766px;width:125px;text-align:center;font-size:18px;line-height:24px;color:#fff;letter-spacing:4px;text-indent:4px;font-weight:bold">确定</div>

</body></html>
